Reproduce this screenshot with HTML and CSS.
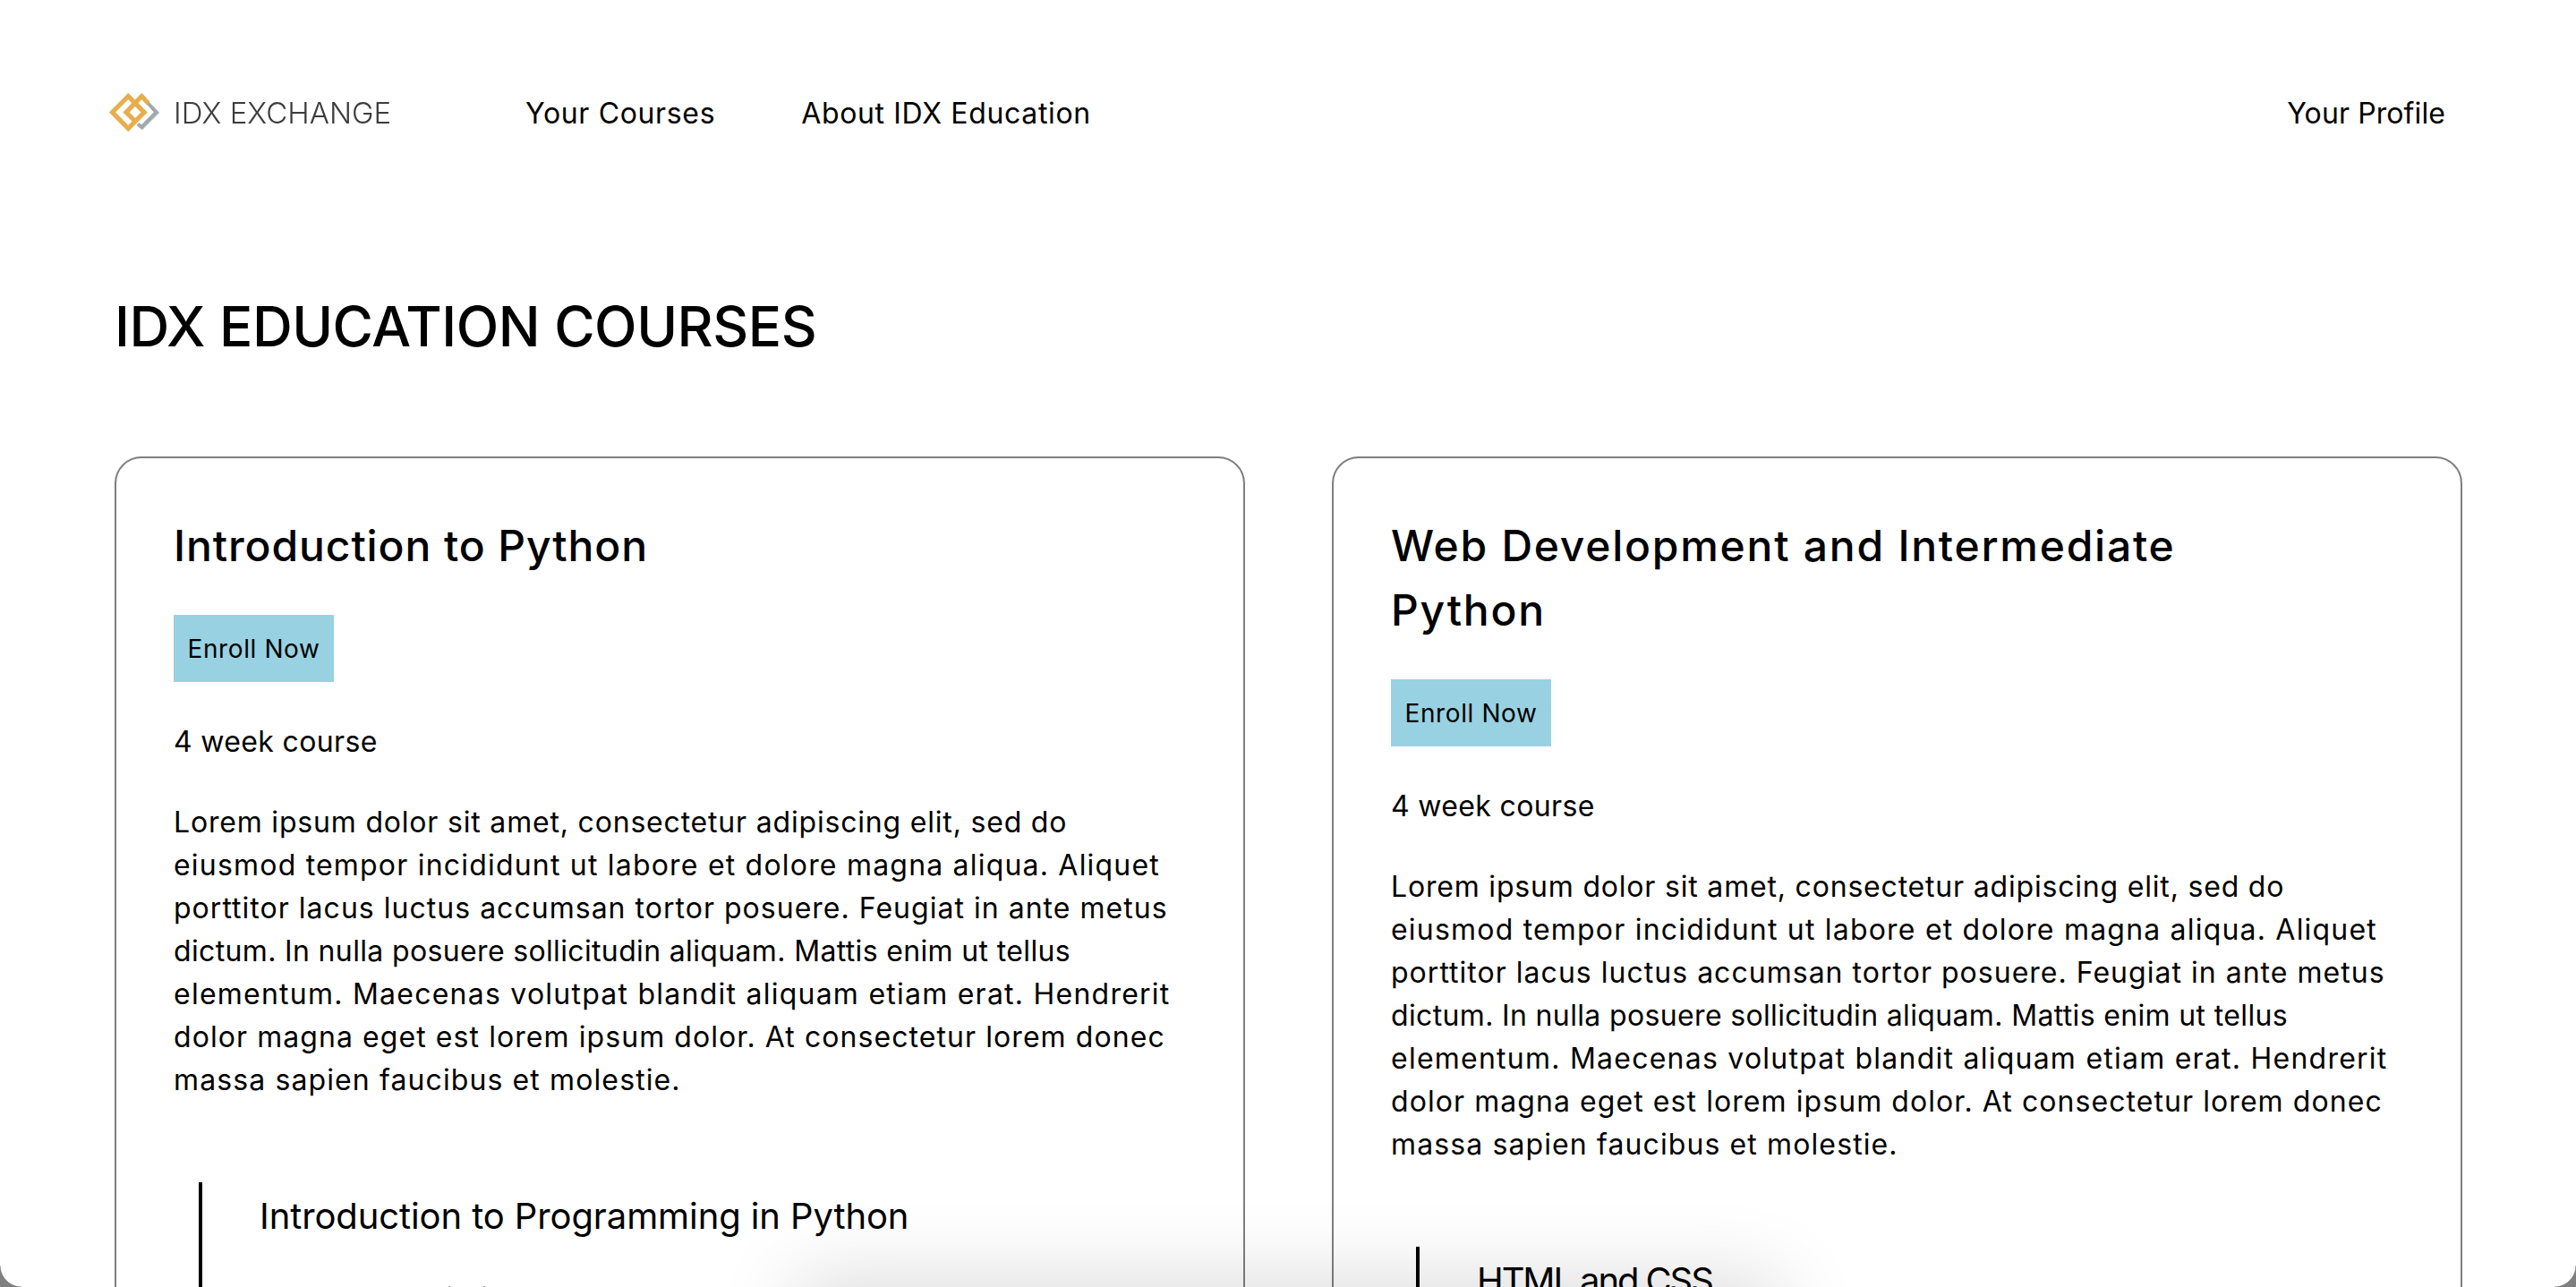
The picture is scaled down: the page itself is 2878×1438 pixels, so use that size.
FILE: index.html
```html
<!DOCTYPE html>
<html lang="en">
<head>
<meta charset="utf-8">
<title>IDX Education Courses</title>
<link rel="stylesheet" href="styles.css">
</head>
<body>
<div class="page">
  <header class="topbar">
    <a class="logo">
      <svg class="logo-mark" viewBox="0 0 60 46" aria-hidden="true">
        <path d="M45.5 12.5 L56 23 L38 41 L33 37" fill="none" stroke="#a5d6e8" stroke-width="2"/>
        <path d="M44 12 L53.5 22.5 L37.3 39 L33 35.5" fill="none" stroke="#a6a6a6" stroke-width="4"/>
        <path d="M22.3 4.5 L4.5 22.5 L22.3 40.5 L40 22.5 Z" fill="none" stroke="#e8ae4c" stroke-width="5.2"/>
        <path d="M30 32.5 L20 22.5 L37.3 4.5 L44.5 12.2" fill="none" stroke="#e8ae4c" stroke-width="5.2"/>
      </svg>
      <span class="logo-text">IDX EXCHANGE</span>
    </a>
    <nav class="nav">
      <a>Your Courses</a>
      <a>About IDX Education</a>
    </nav>
    <a class="profile">Your Profile</a>
  </header>
  <main class="content">
    <h1 class="page-title">IDX EDUCATION COURSES</h1>
    <div class="cards">
      <article class="card">
        <h2 class="card-title">Introduction to Python</h2>
        <button class="enroll">Enroll Now</button>
        <p class="duration">4 week course</p>
        <p class="body"><span class="ln ln-1">Lorem ipsum dolor sit amet, consectetur adipiscing elit, sed do</span> <span class="ln ln-2">eiusmod tempor incididunt ut labore et dolore magna aliqua. Aliquet</span> <span class="ln ln-3">porttitor lacus luctus accumsan tortor posuere. Feugiat in ante metus</span> <span class="ln ln-4">dictum. In nulla posuere sollicitudin aliquam. Mattis enim ut tellus</span> <span class="ln ln-5">elementum. Maecenas volutpat blandit aliquam etiam erat. Hendrerit</span> <span class="ln ln-6">dolor magna eget est lorem ipsum dolor. At consectetur lorem donec</span> <span class="ln ln-7">massa sapien faucibus et molestie.</span></p>
        <section class="module">
          <h3 class="module-title">Introduction to Programming in Python</h3>
          <p class="module-text">Course description and tasks</p>
        </section>
      </article>
      <article class="card">
        <h2 class="card-title card-title-long">Web Development and Intermediate Python</h2>
        <button class="enroll">Enroll Now</button>
        <p class="duration">4 week course</p>
        <p class="body"><span class="ln ln-1">Lorem ipsum dolor sit amet, consectetur adipiscing elit, sed do</span> <span class="ln ln-2">eiusmod tempor incididunt ut labore et dolore magna aliqua. Aliquet</span> <span class="ln ln-3">porttitor lacus luctus accumsan tortor posuere. Feugiat in ante metus</span> <span class="ln ln-4">dictum. In nulla posuere sollicitudin aliquam. Mattis enim ut tellus</span> <span class="ln ln-5">elementum. Maecenas volutpat blandit aliquam etiam erat. Hendrerit</span> <span class="ln ln-6">dolor magna eget est lorem ipsum dolor. At consectetur lorem donec</span> <span class="ln ln-7">massa sapien faucibus et molestie.</span></p>
        <section class="module">
          <h3 class="module-title module-title-caps">HTML and CSS</h3>
          <p class="module-text">Course description and tasks</p>
        </section>
      </article>
    </div>
  </main>
  <div class="dock-shadow"></div>
  <div class="corner corner-left"></div>
  <div class="corner corner-right"></div>
</div>
</body>
</html>
```
FILE: styles.css
```css
* { box-sizing: border-box; }
html, body { margin: 0; height: 100%; background: #fff; }
body { overflow: hidden; font-family: "Inter", "Noto Sans", sans-serif; color: #000; }
.page { position: relative; width: 2878px; height: 1438px; overflow: hidden; background: #fff; }
.topbar { display: flex; align-items: center; height: 252px; padding: 0 146px 0 121px; font-size: 32px; letter-spacing: 0.65px; }
.logo { display: flex; align-items: center; width: 466px; }
.logo-mark { width: 60px; height: 46px; flex: none; filter: blur(0.4px); }
.logo-text { margin-left: 13px; font-size: 33px; font-weight: 300; color: #3c3c3c; letter-spacing: 0; filter: blur(0.5px); }
.nav { display: flex; gap: 96px; }
.profile { margin-left: auto; letter-spacing: 0.1px; }
.content { padding: 0 126px 0 128px; }
.page-title { margin: 70px 0 0; font-size: 62px; line-height: 86px; font-weight: 500; letter-spacing: -0.5px; }
.cards { display: grid; grid-template-columns: 1263px 1263px; gap: 97px; margin-top: 102px; align-items: start; }
.card { border: 2px solid #7f7f7f; border-radius: 30px; padding: 62px 64px; letter-spacing: 0.35px; }
.card-title { margin: 0; max-width: 950px; font-size: 48px; line-height: 72px; font-weight: 500; letter-spacing: 0.9px; }
.card-title-long { letter-spacing: 1.75px; }
.enroll { display: block; margin: 41px 0 0; padding: 0; width: 179px; height: 75px; border: 0; background: #98d2e2; color: #000; font: inherit; font-size: 28px; letter-spacing: 0.6px; }
.duration { margin: 43px 0 0; font-size: 32px; line-height: 48px; }
.body { margin: 42px 0 0; font-size: 32px; line-height: 48px; }
.ln { display: block; white-space: nowrap; }
.ln-1 { letter-spacing: 0.81px; }
.ln-2 { letter-spacing: 1.2px; }
.ln-3 { letter-spacing: 1.02px; }
.ln-4 { letter-spacing: 0.35px; }
.ln-5 { letter-spacing: 1.24px; }
.ln-6 { letter-spacing: 1.07px; }
.ln-7 { letter-spacing: 1.11px; }
.module { margin: 90px 0 0 28px; padding: 8px 0 0 64px; border-left: 4px solid #000; }
.module-title { margin: 0; font-size: 40px; line-height: 60px; font-weight: 400; letter-spacing: -0.1px; }
.module-title-caps { letter-spacing: -2.1px; }
.module-text { margin: 38px 0 0; font-size: 32px; line-height: 48px; }
.dock-shadow { position: absolute; left: 930px; right: 930px; top: 1470px; height: 60px; box-shadow: 0 0 90px 40px rgba(0, 0, 0, 0.15); }
.corner { position: absolute; bottom: 0; width: 24px; height: 24px; }
.corner-left { left: 0; background: radial-gradient(circle at 100% 0, transparent 23px, #808080 24px); }
.corner-right { right: 0; background: radial-gradient(circle at 0 0, transparent 23px, #808080 24px); }
```
